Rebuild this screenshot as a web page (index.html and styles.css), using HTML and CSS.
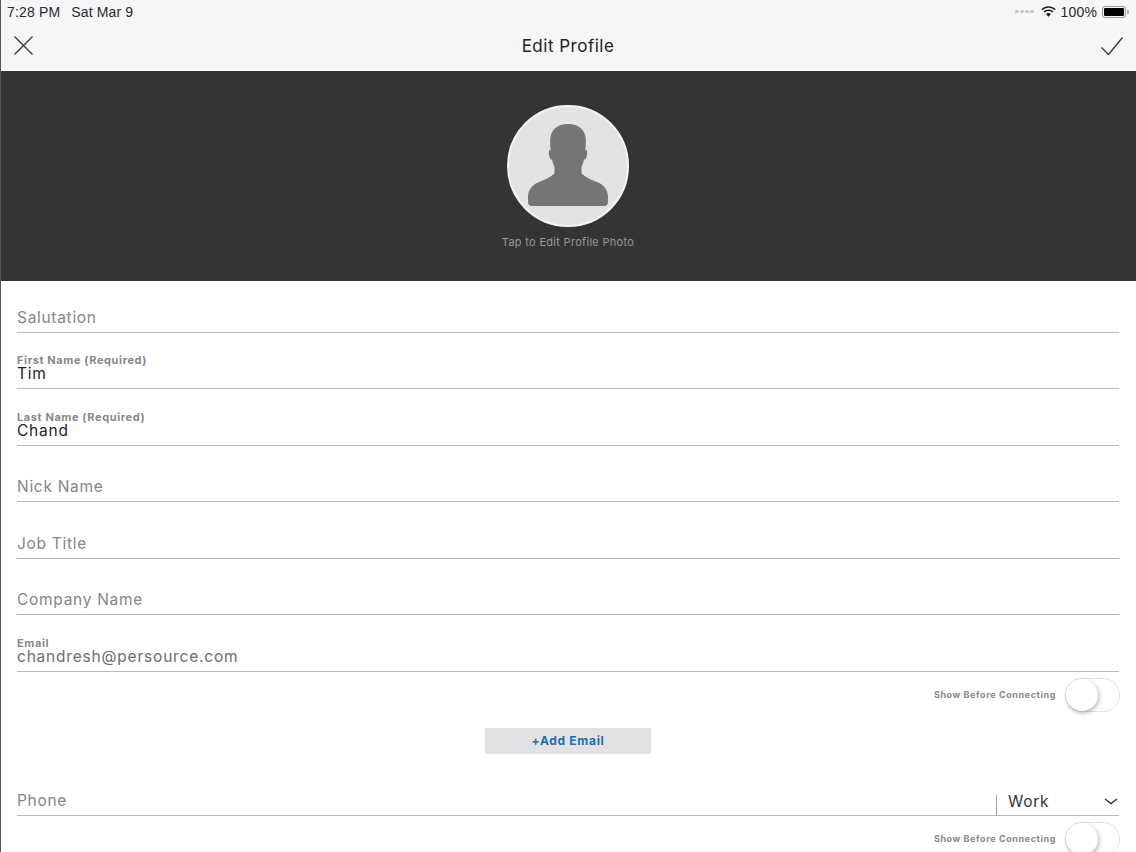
FILE: index.html
```html
<!DOCTYPE html>
<html lang="en">
<head>
<meta charset="utf-8">
<title>Edit Profile</title>
<link rel="stylesheet" href="styles.css">
</head>
<body>
<div class="app">
  <header class="top">
    <div class="status">
      <div class="status-left"><span>7:28 PM</span><span>Sat Mar 9</span></div>
      <div class="status-right">
        <span class="dots"><i></i><i></i><i></i><i></i></span>
        <svg class="wifi" width="15" height="11" viewBox="0 0 17 13"><path d="M8.5 2.2c2.9 0 5.4 1.1 7.300 2.900l1.200-1.300C14.800 1.500 11.800.2 8.500.2S2.200 1.500 0 3.800l1.200 1.300C3.100 3.300 5.600 2.200 8.500 2.200z"/><path d="M8.500 5.900c1.800 0 3.400.7 4.700 1.800l1.200-1.300c-1.600-1.500-3.700-2.400-5.900-2.400s-4.300.9-5.900 2.400l1.200 1.300c1.300-1.100 2.900-1.800 4.700-1.800z"/><path d="M8.500 8.300c-1.100 0-2.100.4-2.900 1.100l2.900 3.200 2.900-3.200c-.8-.7-1.800-1.100-2.900-1.100z"/></svg>
        <span class="pct">100%</span>
        <span class="battery"><b></b></span>
      </div>
    </div>
    <nav class="nav">
      <svg class="nav-icon" width="19" height="19" viewBox="0 0 19 19"><path d="M.5.5l18 18M18.500.5l-18 18"/></svg>
      <h1>Edit Profile</h1>
      <svg class="nav-icon" width="22" height="18" viewBox="0 0 22 18"><path d="M.5 10.500L7.500 17.500 21.500.5"/></svg>
    </nav>
  </header>

  <section class="hero">
    <div class="avatar">
      <svg width="80" height="82" viewBox="0 0 80 82"><path d="M40 0C31 0 24 4 22.500 13c-.6 4-.4 8 .2 13-1.700-.3-2.200 1.500-1.700 4.500.4 3 1.300 5 3 5.200.8 3 1.500 5.500 2.500 7.300V49C24 53 16 56 10 58.500 4 61 .5 66 0 72v6c0 2.500 1.500 4 4 4h72c2.500 0 4-1.500 4-4v-6c-.5-6-4-11-10-13.500C64 56 56 53 53.500 49V43c1-1.800 1.700-4.300 2.500-7.300 1.700-.2 2.600-2.200 3-5.200.5-3 0-4.800-1.700-4.500.6-5 .8-9 .2-13C56 4 49 0 40 0z"/></svg>
    </div>
    <p class="hero-hint">Tap to Edit Profile Photo</p>
  </section>

  <main class="form">
    <div class="field first"><span class="placeholder">Salutation</span></div>
    <div class="field"><label>First Name (Required)</label><span class="value">Tim</span></div>
    <div class="field"><label>Last Name (Required)</label><span class="value">Chand</span></div>
    <div class="field"><span class="placeholder">Nick Name</span></div>
    <div class="field"><span class="placeholder">Job Title</span></div>
    <div class="field"><span class="placeholder">Company Name</span></div>
    <div class="field"><label>Email</label><span class="value muted">chandresh@persource.com</span></div>
    <div class="show"><span>Show Before Connecting</span><span class="toggle"></span></div>
    <div class="add-row"><button class="add" type="button">+Add Email</button></div>
    <div class="field phone">
      <span class="placeholder">Phone</span>
      <div class="type"><span>Work</span><svg width="14" height="7" viewBox="0 0 14 7"><path d="M1 1l6 4.500L13 1"/></svg></div>
    </div>
    <div class="show"><span>Show Before Connecting</span><span class="toggle"></span></div>
  </main>
</div>
</body>
</html>
```
FILE: styles.css
```css
* { box-sizing: border-box; }
html, body { margin: 0; height: 100%; }
body { overflow: hidden; background: #fff; font-family: "Inter", "Liberation Sans", sans-serif; }
.app { width: 1136px; height: 852px; overflow: hidden; border-left: 1px solid #55555a; background: #fff; }

.top { height: 71px; background: #f6f5f8; padding: 0 6px; }
.status { height: 23px; display: flex; justify-content: space-between; align-items: center; color: #2a2a2c; font-family: "Liberation Sans", sans-serif; font-size: 14px; letter-spacing: .15px; padding-right: 1px; }
.status-left { display: flex; gap: 11px; }
.status-right { display: flex; align-items: center; gap: 5px; }
.dots { display: flex; gap: 1.500px; margin-right: 2px; }
.dots i { width: 3.500px; height: 3.500px; border-radius: 50%; background: #c4c4c6; }
.wifi { fill: #1a1a1c; }
.battery { width: 24px; height: 12px; border: 1px solid #9a9a9c; border-radius: 3px; padding: 1px; margin-right: 3px; position: relative; }
.battery b { display: block; height: 100%; background: #000; border-radius: 1px; }
.battery::after { content: ""; position: absolute; right: -4px; top: 3px; width: 2px; height: 4px; background: #a8a8aa; border-radius: 0 1px 1px 0; }

.nav { height: 48px; display: flex; align-items: center; justify-content: space-between; padding: 0 7px 3px 7px; }
.nav h1 { margin: 0 0 0 2px; font-size: 17px; font-weight: 400; color: #222; letter-spacing: .5px; }
.nav-icon path { fill: none; stroke: #3a3a3c; stroke-width: 1.400; }

.hero { height: 210px; background: #353336; display: flex; flex-direction: column; align-items: center; padding-top: 34px; margin-left: -1px; }
.avatar { width: 122px; height: 122px; border-radius: 50%; background: #e3e2e6; border: 2px solid #f5f5f6; display: flex; justify-content: center; padding-top: 17px; }
.avatar svg { fill: #757478; }
.hero-hint { margin: 8px 0 0; font-size: 11px; color: #98979b; letter-spacing: .3px; }

.form { padding: 0 17px 0 16px; }
.field { height: 56.500px; border-bottom: 1px solid #b9b9bb; display: flex; flex-direction: column; justify-content: flex-end; padding-bottom: 5px; }
.field.first { height: 51.500px; }
.placeholder { font-size: 15.500px; line-height: 20px; color: #86858a; letter-spacing: .7px; margin-bottom: -1px; }
.field label { font-size: 11px; line-height: 11px; font-weight: 700; color: #88878b; margin-bottom: -1px; letter-spacing: .6px; }
.value { font-size: 15.500px; line-height: 18px; color: #252527; letter-spacing: .8px; }
.value.muted { color: #6d6c70; }

.show { height: 46px; display: flex; justify-content: flex-end; align-items: center; gap: 9px; font-size: 9px; font-weight: 700; color: #88878b; letter-spacing: .6px; margin-right: -1px; }
.toggle { width: 55px; height: 34px; border: 1px solid #e4e4e6; border-radius: 17px; position: relative; background: #fff; flex: none; }
.toggle::after { content: ""; position: absolute; left: 0; top: 0; width: 32px; height: 32px; border-radius: 50%; background: #fff; box-shadow: 1px 2px 4px rgba(0,0,0,.3); }

.add-row { display: flex; justify-content: center; height: 48px; padding-top: 10px; }
.add { width: 166px; height: 26px; border: 0; padding: 0; background: #e2e2e4; color: #1e6eab; font: 700 12px "Inter", "Liberation Sans", sans-serif; letter-spacing: .7px; }

.field.phone { height: 50px; flex-direction: row; justify-content: space-between; align-items: flex-end; padding-bottom: 0; }
.field.phone .placeholder { margin-bottom: 4px; }
.type { width: 123px; height: 20px; border-left: 1px solid #9a9a9c; display: flex; align-items: center; justify-content: space-between; padding: 0 1px 6px 11px; font-size: 15.500px; line-height: 12px; color: #333; letter-spacing: .7px; }
.type svg path { fill: none; stroke: #333; stroke-width: 1.400; }
```
